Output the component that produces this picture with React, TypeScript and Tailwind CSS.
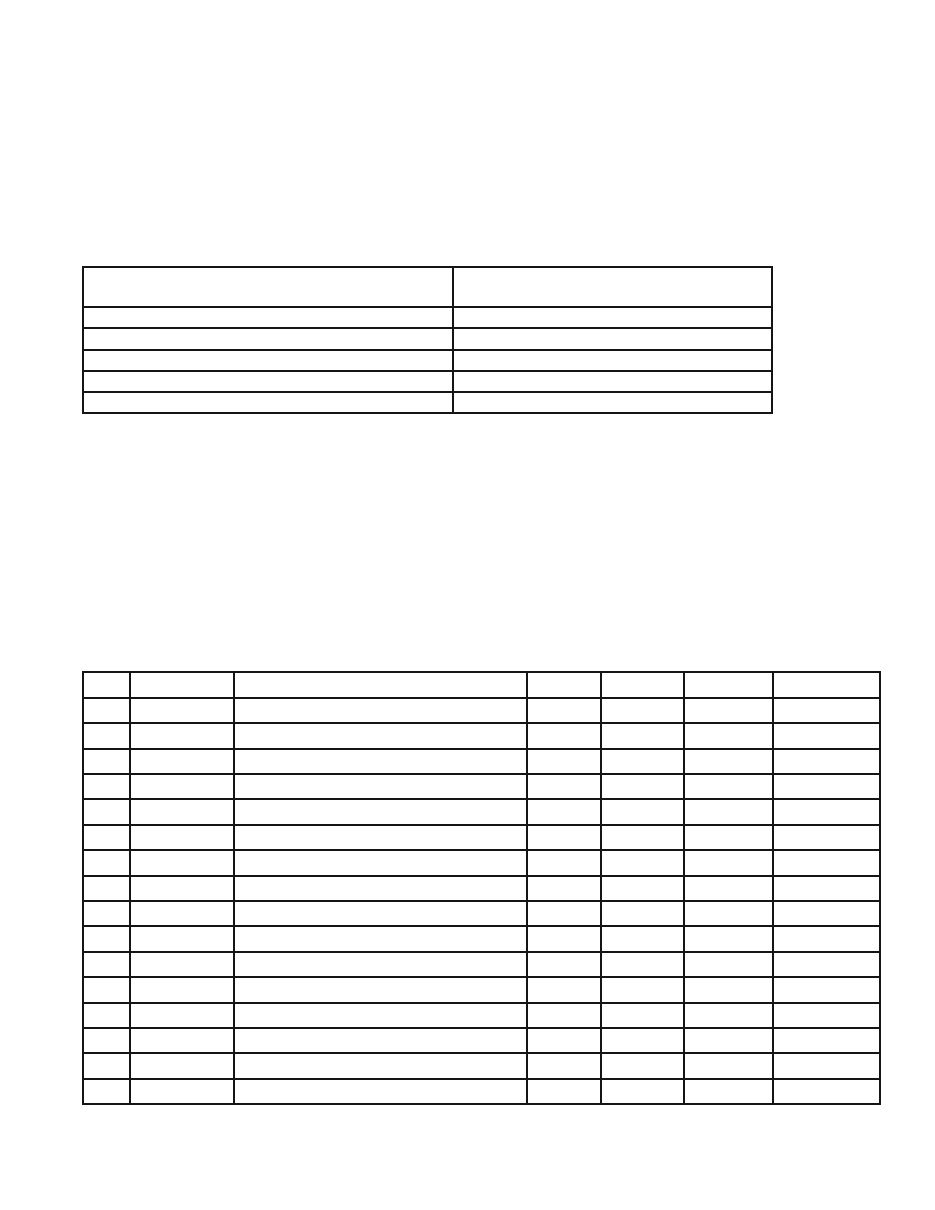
import React from "react";

const SUMMARY_ROWS = 5;
const DETAIL_ROWS = 16;

// column widths measured line-to-line on the form
const detailCols = ["w-[47px]", "w-[104px]", "w-[293px]", "w-[74px]", "w-[83px]", "w-[89px]", "w-[107px]"];

const cell = "border-2 border-[#151515] p-0";

export default function App() {
  return (
    <div className="w-[935px] h-[1210px] bg-white pl-[82px] pt-[266px]" style={{ fontFamily: "'Liberation Sans', Arial, sans-serif" }}>
      {/* summary table */}
      <table className="table-fixed border-collapse w-[689px]">
        <colgroup>
          <col className="w-[370px]" />
          <col className="w-[319px]" />
        </colgroup>
        <tbody>
          <tr className="h-[40px]">
            <td className={cell}></td>
            <td className={cell}></td>
          </tr>
          {Array.from({ length: SUMMARY_ROWS }).map((_, i) => (
            <tr key={i} className="h-[21.3px]">
              <td className={cell}></td>
              <td className={cell}></td>
            </tr>
          ))}
        </tbody>
      </table>

      {/* detail table */}
      <table className="table-fixed border-collapse w-[797px] mt-[257px]">
        <colgroup>
          {detailCols.map((w, i) => (
            <col key={i} className={w} />
          ))}
        </colgroup>
        <tbody>
          {Array.from({ length: DETAIL_ROWS + 1 }).map((_, r) => (
            <tr key={r} className="h-[25.4px]">
              {detailCols.map((_, c) => (
                <td key={c} className={cell}></td>
              ))}
            </tr>
          ))}
        </tbody>
      </table>
    </div>
  );
}
